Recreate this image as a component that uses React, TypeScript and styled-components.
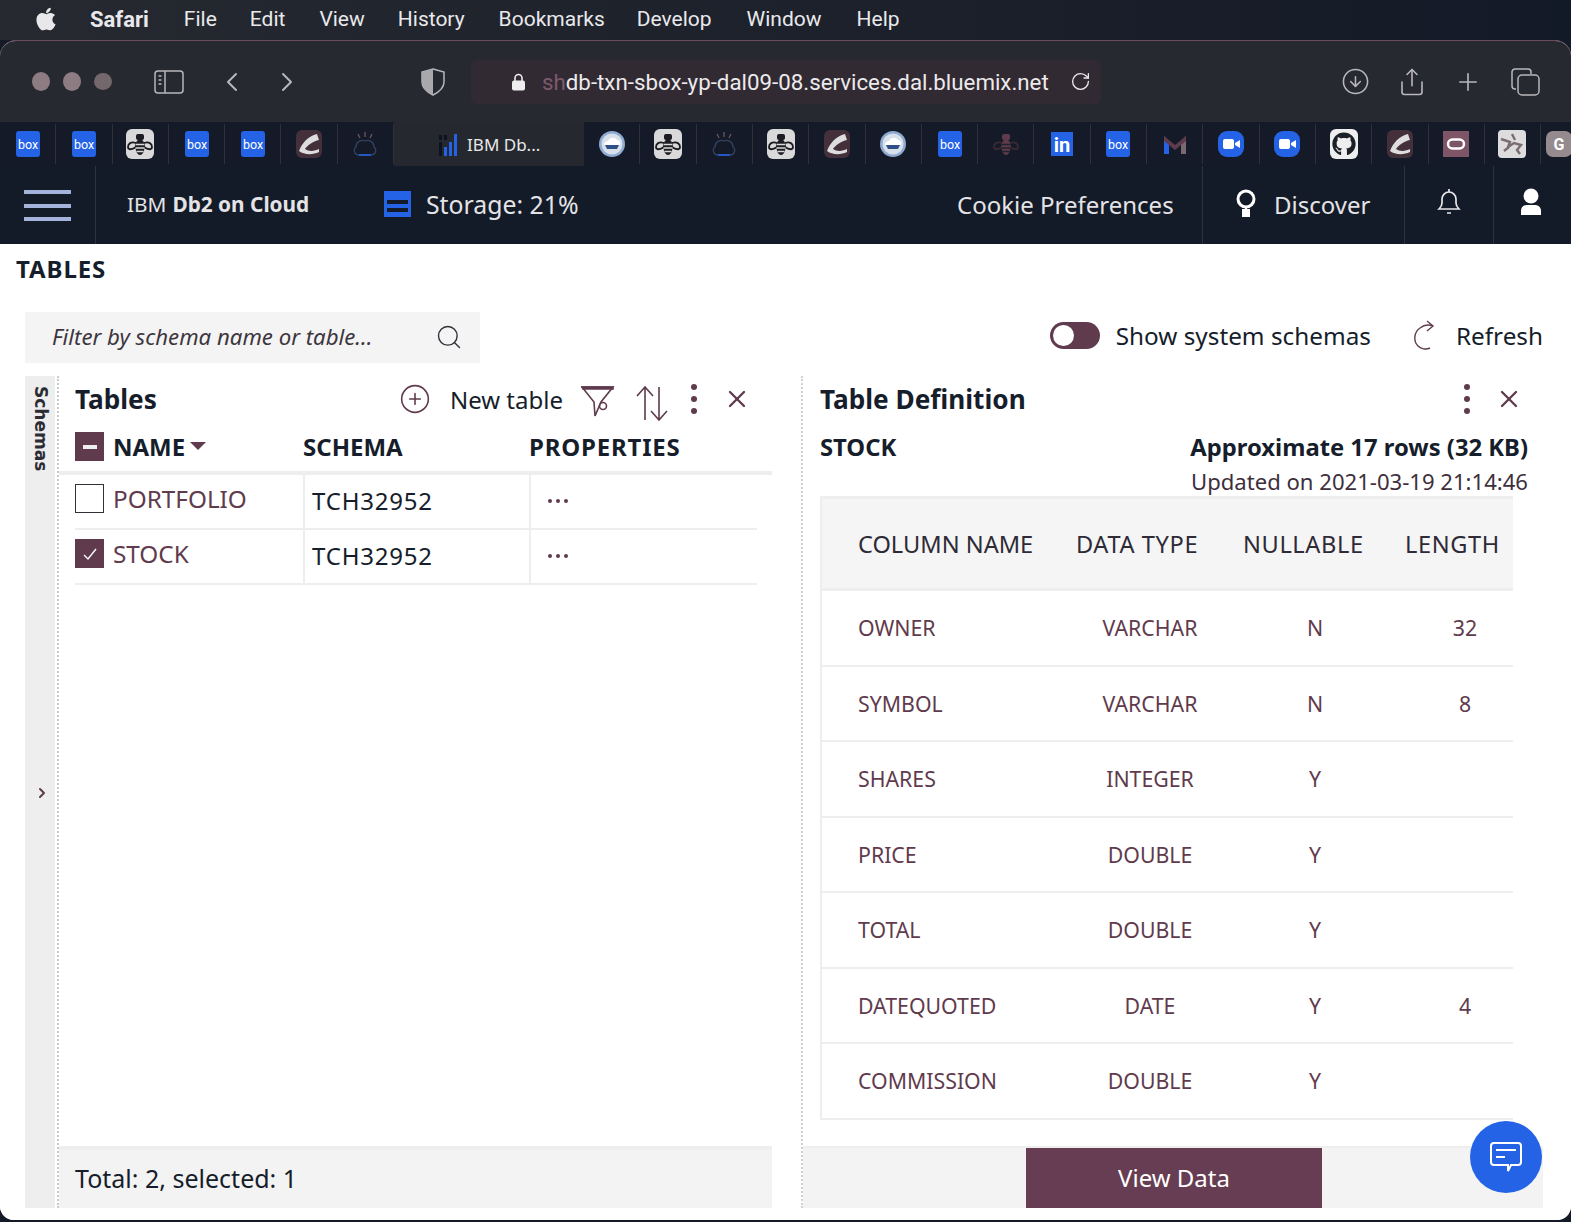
import React from "react";
import styled, { createGlobalStyle } from "styled-components";
import { FaApple, FaGithub } from "react-icons/fa";
import { ChevronLeft, ChevronRight, RotateCw, CircleArrowDown, Share, Plus, Search, CirclePlus, X } from "lucide-react";

const Global = createGlobalStyle`
  html, body { margin: 0; padding: 0; background: #141a27; }
  * { box-sizing: border-box; }
  #root { width: 1571px; height: 1222px; overflow: hidden; }
`;
const PLEX = `"Noto Sans", "Open Sans", sans-serif`;
const INK = "#161d2b";
const WINE = "#5f3b4d";

const Page = styled.div`
  width: 1571px; height: 1222px; background: #141a27; overflow: hidden; position: relative;
  font-family: ${PLEX}; color: ${INK};
`;
const MenuBar = styled.div`
  height: 40px; display: flex; align-items: center; padding: 0 0 2px 33px;
  background: linear-gradient(90deg, #262930 0%, #1d212b 50%, #131a27 100%);
  font: 400 21px Roboto, sans-serif; color: #e9e9ec;
`;
const MenuItem = styled.span<{ $left: number; $bold?: boolean }>`
  margin-left: ${(p) => p.$left}px; font-weight: ${(p) => (p.$bold ? 700 : 400)}; font-size: ${(p) => (p.$bold ? 22 : 21)}px; white-space: nowrap;
`;
const Browser = styled.div`
  height: 1180px; border-radius: 16px 16px 14px 14px; overflow: hidden; background: #fff;
  border-top: 1px solid #6d4a5c; display: flex; flex-direction: column; margin-bottom: 2px;
`;
const Toolbar = styled.div`
  height: 81px; flex: none; background: #26292f; display: flex; align-items: center; color: #b9b7bb; padding-left: 32px;
`;
const Light = styled.i<{ $dim?: boolean }>`
  width: 18px; height: ${(p) => (p.$dim ? 17 : 19)}px; border-radius: 50%; background: ${(p) => (p.$dim ? "#75686d" : "#8d7c81")}; margin-right: 13px; flex: none;
`;
const IconSlot = styled.span<{ $ml: number; $w?: number }>`
  width: ${(p) => p.$w ?? 40}px; margin-left: ${(p) => p.$ml}px; flex: none; display: flex; align-items: center; justify-content: center;
`;
const UrlBox = styled.div`
  width: 630px; height: 44px; flex: none; margin-left: 18px; background: #322a32; border-radius: 6px; display: flex; align-items: center;
  padding-left: 41px; color: #eceaec; font: 400 22.3px Roboto, sans-serif; white-space: nowrap;
`;
const Faded = styled.span` color: #7d5a6b; `;
const UrlText = styled.span` margin-left: 17px; `;
const TabBar = styled.div`
  height: 44px; flex: none; background: #141a27; display: flex; align-items: stretch; overflow: hidden;
`;
const FavTab = styled.div<{ $last?: boolean }>`
  width: ${(p) => (p.$last ? 36 : 56.3)}px; flex: none; display: flex; align-items: center; justify-content: center;
  border-right: ${(p) => (p.$last ? "0" : "1px solid #2f3138")}; margin: 2px 0;
`;
const ActiveTab = styled.div`
  width: 190px; flex: none; background: #25282f; display: flex; align-items: center; padding-left: 45px; gap: 10px;
  color: #e8e8ea; font: 400 17px ${PLEX}; height: 44px;
`;
const AppHeader = styled.div`
  height: 78px; flex: none; background: #141b28; display: flex; align-items: stretch; color: #e4e3e6; font-size: 24px;
`;
const Burger = styled.div`
  width: 96px; flex: none; border-right: 1px solid #2e323c; display: flex; flex-direction: column; gap: 9.5px; padding: 24px 0 0 24px;
  span { width: 47px; height: 4px; background: #a3b3dc; display: block; }
`;
const Brand = styled.div`
  width: 288px; flex: none; padding: 0 0 2px 31px; display: flex; align-items: center; font-size: 20.8px;
  b { font-weight: 700; margin-left: 6px; }
`;
const Storage = styled.div` display: flex; align-items: center; gap: 15px; flex: 1; font-size: 24.8px; padding-bottom: 2px; `;
const Cell = styled.div<{ $w: number; $pad?: number; $gap?: number; $center?: boolean; $rp?: number }>`
  width: ${(p) => p.$w}px; flex: none; display: flex; align-items: center; gap: ${(p) => p.$gap ?? 0}px;
  justify-content: ${(p) => (p.$center ? "center" : "flex-start")}; padding: 0 ${(p) => p.$rp ?? 0}px 2px ${(p) => p.$pad ?? 0}px;
  border-left: 1px solid #2e323c; white-space: nowrap;
`;
const Plain = styled.div` width: 245px; flex: none; display: flex; align-items: center; white-space: nowrap; padding-bottom: 2px; `;
const LiftedIcon = styled.svg` margin-bottom: 4px; `;
const Content = styled.div`
  flex: 1; min-height: 0; background: #fff; display: flex; flex-direction: column; padding: 0 28px 12px 25px;
`;
const PageTitle = styled.h1`
  margin: 0 0 0 -9px; height: 50px; font-size: 24px; letter-spacing: .9px; font-weight: 700; line-height: 50px;
`;
const FilterRow = styled.div` height: 82px; flex: none; display: flex; align-items: flex-start; `;
const SearchBox = styled.div`
  margin-top: 18px; width: 455px; height: 51px; background: #f4f4f4; display: flex; align-items: center; justify-content: space-between;
  padding: 0 17px 2px 27px; color: #3d3640; font-size: 22.2px; font-style: italic; white-space: nowrap;
`;
const RightTools = styled.div`
  margin-left: auto; margin-top: 16px; height: 51px; display: flex; align-items: center; font-size: 24.3px; white-space: nowrap;
`;
const Toggle = styled.span`
  width: 50px; height: 27px; border-radius: 14px; background: ${WINE}; position: relative; margin-right: 16px;
  &::after { content: ""; position: absolute; left: 3px; top: 3px; width: 21px; height: 21px; border-radius: 50%; background: #fff; }
`;
const RefreshWrap = styled.span` display: flex; margin: 0 19px 0 38px; color: ${WINE}; `;
const Columns = styled.div` flex: 1; min-height: 0; display: flex; align-items: stretch; `;
const Rail = styled.div`
  width: 30px; flex: none; background: #eee; position: relative; font: 700 17px "DejaVu Sans", sans-serif; color: #2c2c34;
`;
const RailLabel = styled.span`
  position: absolute; top: 10px; left: 4px; writing-mode: vertical-rl; line-height: 24px;
`;
const RailChevron = styled.span` position: absolute; top: 409px; left: 9px; color: ${WINE}; display: flex; `;
const TablesPanel = styled.section`
  width: 715px; flex: none; margin-right: 29px; display: flex; flex-direction: column; border-left: 2px dotted #c9cbcb; margin-left: 2px;
`;
const DefPanel = styled.section`
  flex: 1; min-width: 0; display: flex; flex-direction: column; border-left: 2px dotted #d0d2d2; position: relative;
`;
const PanelHead = styled.div<{ $left: number }>`
  height: 46px; flex: none; display: flex; align-items: center; padding-left: ${(p) => p.$left}px; position: relative;
`;
const PanelTitle = styled.h2` margin: 0; font-size: 26.2px; font-weight: 700; white-space: nowrap; `;
const NewTable = styled.div`
  margin-left: auto; display: flex; align-items: center; font-size: 24px; white-space: nowrap; color: ${WINE};
  span { color: ${INK}; margin: 0 11px 0 19px; }
`;
const HeadIcon = styled.span<{ $w: number; $auto?: boolean; $drop?: number }>`
  width: ${(p) => p.$w}px; flex: none; display: flex; justify-content: center; color: ${WINE};
  margin-left: ${(p) => (p.$auto ? "auto" : "0")}; margin-top: ${(p) => p.$drop ?? 0}px;
`;
const GridHead = styled.div`
  height: 53px; flex: none; display: grid; grid-template-columns: 228px 226px 1fr; padding-left: 16px; border-bottom: 4px solid #eee;
  font-size: 24px; font-weight: 700; align-items: center;
`;
const NameHead = styled.div` display: flex; align-items: center; `;
const PropHead = styled.div` letter-spacing: .8px; `;
const Sort = styled.i`
  width: 0; height: 0; border-left: 8px solid transparent; border-right: 8px solid transparent; border-top: 8px solid ${WINE}; margin: 0 0 2px 5px;
`;
const Check = styled.span<{ $on?: boolean }>`
  width: 29px; height: 29px; flex: none; margin-right: 9px; display: flex; align-items: center; justify-content: center;
  background: ${(p) => (p.$on ? WINE : "#fff")}; border: 1.5px solid ${(p) => (p.$on ? WINE : "#33303a")}; color: #fff;
`;
const Row = styled.div`
  height: 55px; flex: none; display: grid; grid-template-columns: 228px 226px 1fr; margin: 0 15px 0 16px; border-bottom: 2px solid #eee; align-items: stretch;
`;
const NameCell = styled.div` display: flex; align-items: center; padding-bottom: 6px; color: ${WINE}; font-size: 24.3px; `;
const Cell2 = styled.div`
  display: flex; align-items: center; border-left: 2px solid #eee; padding: 0 0 2px 7px; font-size: 24px; letter-spacing: .8px;
`;
const Dots = styled.span` display: flex; gap: 4px; padding-left: 10px; i { width: 4px; height: 4px; border-radius: 50%; background: ${WINE}; display: block; } `;
const Spacer = styled.div` flex: 1; `;
const Footer = styled.div`
  height: 62px; flex: none; background: #f3f3f3; border-top: 4px solid #eee; display: flex; align-items: center; padding: 0 0 2px 16px; font-size: 25px; position: relative;
`;
const DefHead = styled.div`
  padding: 0 15px 2px 17px; height: 51px; flex: none; display: flex; align-items: center; justify-content: space-between; font-size: 23.8px; font-weight: 700;
`;
const Updated = styled.div` text-align: right; padding-right: 15px; font-size: 22.1px; color: #3e2f3c; height: 23px; line-height: 16px; white-space: nowrap; `;
const DefTable = styled.div`
  margin-left: 17px; width: 693px; flex: none; border-left: 2px solid #eee; border-top: 3px solid #eee; overflow: hidden;
`;
const DefGrid = styled.div`
  display: grid; grid-template-columns: 238px 180px 150px 150px; height: 75.5px; align-items: center; width: 719px;
  border-bottom: 2px solid #eee; background: #fff; color: ${WINE}; font-size: 21.3px;
`;
const DefHeadRow = styled.div`
  display: grid; grid-template-columns: 254px 167px 162px 1fr; height: 92px; align-items: center; width: 719px;
  border-bottom: 3px solid #eee; background: #f5f5f5; color: #2e2a36; font-size: 23.6px;
`;
const DefName = styled.span` padding-left: 36px; white-space: nowrap; `;
const DefCenter = styled.span` text-align: center; white-space: nowrap; `;
const DefLeft = styled.span` white-space: nowrap; letter-spacing: .6px; `;
const DefFooter = styled.div`
  margin-top: auto; height: 62px; flex: none; background: #f3f3f3; border-top: 2px solid #eee; display: flex; justify-content: center;
`;
const ViewData = styled.button`
  width: 296px; height: 60px; background: #663d52; color: #fff; border: 0; font: 400 24px ${PLEX}; margin-left: 2px; padding: 0 0 2px;
`;
const Fab = styled.div`
  position: absolute; left: 1470px; top: 1121px; width: 72px; height: 72px; border-radius: 50%; background: #2563e6; display: flex; align-items: center; justify-content: center; color: #fff;
`;
const HubTile = styled.span`
  width: 28px; height: 30px; border-radius: 6px; background: #eee; display: flex; align-items: center; justify-content: center; color: #1b1f27;
`;

const Bee: React.FC<{ dark?: boolean }> = ({ dark }) => {
  const ink = dark ? "#5f3b4d" : "#1c1c22";
  const stripe = dark ? "#20222c" : "#d9d9d9";
  return (
    <svg width="30" height="30" viewBox="0 0 30 30">
      {!dark && <rect x="1" y="0" width="28" height="30" rx="6" fill="#d9d9d9" />}
      <path d="M11 14C6 12 3 15 3 18c0 3 4 3 8 0zM19 14c5-2 8 1 8 4 0 3-4 3-8 0z" fill="none" stroke={dark ? "#3b2a34" : ink} strokeWidth="1.8" />
      <ellipse cx="15" cy="18" rx="4.500" ry="8" fill={ink} />
      <path d="M10.500 15.500h9M10.500 19h9M11.500 22.500h7" stroke={stripe} strokeWidth="1.3" />
      <rect x="11" y="5" width="8" height="6" rx="2" fill={ink} />
    </svg>
  );
};
const BoxIcon = () => (
  <svg width="24" height="26" viewBox="0 0 24 26"><rect width="24" height="26" rx="3" fill="#2563e6" /><text x="12" y="17.5" textAnchor="middle" fontSize="12.5" fill="#fff" fontFamily="Roboto, sans-serif">box</text></svg>
);
const Shoe = () => (
  <svg width="26" height="28" viewBox="0 0 26 28"><rect width="26" height="28" rx="6" fill="#44303a" /><path d="M3 21c3-8 9-15 18-17l2 6c-6 1-12 6-14 9 4 3 10 2 14 0v3c-6 3-15 3-20-1z" fill="#ddd" /></svg>
);
const IbmCloud = () => (
  <svg width="26" height="28" viewBox="0 0 26 28" fill="none"><path d="M7 25c-5 0-6-6-3-8 0-5 5-8 9-6 4-2 9 1 9 6 3 2 2 8-3 8z" stroke="#33405e" strokeWidth="1.3" /><path d="M7 25h12" stroke="#2563e6" strokeWidth="1.6" /><path d="M13 2v5M6 4l2 4M20 4l-2 4" stroke="#6d5562" strokeWidth="1.3" /></svg>
);
const Drop = () => (
  <svg width="26" height="26" viewBox="0 0 26 26"><circle cx="13" cy="13" r="13" fill="#8fabd2" /><circle cx="13" cy="13" r="10.500" fill="#d8e0ea" /><path d="M5 14c0-3 3-4 4-4 2-4 7-4 9-1 2 0 4 2 3 5z" fill="#fff" /><path d="M6 14h14l-2 4H8z" fill="#2f4f88" /></svg>
);
const Linked = () => (
  <svg width="22" height="24" viewBox="0 0 22 24"><rect width="22" height="24" fill="#2563e6" /><text x="11" y="20" textAnchor="middle" fontSize="20" fontWeight="700" fill="#fff" fontFamily="Roboto, sans-serif">in</text></svg>
);
const Gmail = () => (
  <svg width="24" height="20" viewBox="0 0 24 20"><path d="M1 20V2l5 5v13z" fill="#2563e6" /><path d="M18 20V7l5-5v18z" fill="#7a6a70" /><path d="M1 2l11 9 11-9v5l-11 9L1 7z" fill="#5f3b4d" /></svg>
);
const Zoom = () => (
  <svg width="26" height="26" viewBox="0 0 26 26"><rect width="26" height="26" rx="9" fill="#2563e6" /><rect x="5" y="8" width="11" height="10" rx="2" fill="#fff" /><path d="M17 12l5-3v8l-5-3z" fill="#fff" /></svg>
);
const Hub = () => <HubTile><FaGithub size={24} /></HubTile>;
const Oracle = () => (
  <svg width="26" height="26" viewBox="0 0 26 26"><rect width="26" height="26" fill="#7d5566" /><rect x="5" y="8.500" width="16" height="9" rx="4.500" fill="none" stroke="#fff" strokeWidth="2.500" /></svg>
);
const MapIco = () => (
  <svg width="28" height="28" viewBox="0 0 28 28"><rect width="28" height="28" rx="4" fill="#ddd" /><path d="M3 9l9 3-2 5 6-4 7 2-4 5 3 4M6 21l5-4M14 4l3 6" stroke="#7b6d74" strokeWidth="2.400" fill="none" /></svg>
);
const GIco = () => (
  <svg width="26" height="26" viewBox="0 0 26 26"><rect width="26" height="26" rx="7" fill="#958a8e" /><text x="13" y="19" textAnchor="middle" fontSize="16" fontWeight="700" fill="#fff" fontFamily="Roboto, sans-serif">G</text></svg>
);

const before = [<BoxIcon />, <BoxIcon />, <Bee />, <BoxIcon />, <BoxIcon />, <Shoe />, <IbmCloud />];
const after = [<Drop />, <Bee />, <IbmCloud />, <Bee />, <Shoe />, <Drop />, <BoxIcon />, <Bee dark />, <Linked />, <BoxIcon />, <Gmail />, <Zoom />, <Zoom />, <Hub />, <Shoe />, <Oracle />, <MapIco />];

const menus: [string, number][] = [["File", 35], ["Edit", 33], ["View", 34], ["History", 33], ["Bookmarks", 34], ["Develop", 32], ["Window", 35], ["Help", 35]];
const rows = [
  ["OWNER", "VARCHAR", "N", "32"], ["SYMBOL", "VARCHAR", "N", "8"], ["SHARES", "INTEGER", "Y", ""], ["PRICE", "DOUBLE", "Y", ""],
  ["TOTAL", "DOUBLE", "Y", ""], ["DATEQUOTED", "DATE", "Y", "4"], ["COMMISSION", "DOUBLE", "Y", ""],
];

const Kebab = () => (
  <svg width="8" height="32" viewBox="0 0 8 32" fill={WINE}><circle cx="4" cy="4" r="3" /><circle cx="4" cy="16" r="3" /><circle cx="4" cy="28" r="3" /></svg>
);
const Filter = () => (
  <svg width="34" height="34" viewBox="0 0 34 34" fill="none" stroke={WINE} strokeWidth="1.6"><path d="M1 3h31L20 18l-6 14-1-14z" /><circle cx="22" cy="22" r="3.500" /><path d="M1 3h31v2H2z" fill={WINE} /></svg>
);
const Updown = () => (
  <svg width="34" height="36" viewBox="0 0 34 36" fill="none" stroke={WINE} strokeWidth="1.6"><path d="M10 35V2M2 11l8-9 8 9M24 2v33M16 26l8 9 8-9" /></svg>
);

export default function App() {
  return (
    <Page>
      <Global />
      <MenuBar>
        <FaApple size={26} color="#e8e8ea" />
        <MenuItem $left={31} $bold>Safari</MenuItem>
        {menus.map(([m, l]) => <MenuItem key={m} $left={l}>{m}</MenuItem>)}
      </MenuBar>
      <Browser>
        <Toolbar>
          <Light /><Light /><Light $dim />
          <IconSlot $ml={24}>
            <svg width="30" height="24" viewBox="0 0 30 24" fill="none" stroke="#b9b7bb" strokeWidth="1.5"><rect x="1" y="1" width="28" height="22" rx="3" /><path d="M11 1v22M4.500 6h3M4.500 10h3M4.500 14h3" /></svg>
          </IconSlot>
          <IconSlot $ml={23}><ChevronLeft size={32} strokeWidth={1.5} /></IconSlot>
          <IconSlot $ml={15}><ChevronRight size={32} strokeWidth={1.5} /></IconSlot>
          <IconSlot $ml={106}>
            <svg width="24" height="28" viewBox="0 0 24 28"><path d="M12 1l11 3v10c0 6-5 10-11 13C6 24 1 20 1 14V4z" fill="#26292f" stroke="#b9b7bb" strokeWidth="1.5" /><path d="M12 1L1 4v10c0 6 5 10 11 13z" fill="#a9a8ac" /></svg>
          </IconSlot>
          <UrlBox>
            <svg width="13" height="18" viewBox="0 0 13 18"><path d="M3 8V5a3.500 3.500 0 017 0v3" fill="none" stroke="#eee" strokeWidth="1.6" /><rect y="7.500" width="13" height="10" rx="2" fill="#eee" /></svg>
            <UrlText><Faded>sh</Faded>db-txn-sbox-yp-dal09-08.services.dal.bluemix.net</UrlText>
            <IconSlot $ml={20} $w={24}><RotateCw size={21} strokeWidth={1.5} /></IconSlot>
          </UrlBox>
          <IconSlot $ml={234}><CircleArrowDown size={29} strokeWidth={1.3} /></IconSlot>
          <IconSlot $ml={17}><Share size={30} strokeWidth={1.3} /></IconSlot>
          <IconSlot $ml={16}><Plus size={28} strokeWidth={1.4} /></IconSlot>
          <IconSlot $ml={18}>
            <svg width="30" height="28" viewBox="0 0 30 28" fill="none" stroke="#b9b7bb" strokeWidth="1.5"><path d="M5 21H4a3 3 0 01-3-3V4a3 3 0 013-3h13a3 3 0 013 3v2" /><rect x="7" y="7" width="21" height="20" rx="4" /></svg>
          </IconSlot>
        </Toolbar>
        <TabBar>
          {before.map((f, i) => <FavTab key={i}>{f}</FavTab>)}
          <ActiveTab>
            <svg width="18" height="23" viewBox="0 0 18 23"><path d="M0 9h3v14H0zM0 2h3v5H0zM5 2h3v5H5z" fill="#0d1320" /><path d="M5 14h3v9H5zM10 9h3v14h-3zM15 1h3v22h-3z" fill="#2563e6" /></svg>
            <span>IBM Db...</span>
          </ActiveTab>
          {after.map((f, i) => <FavTab key={i}>{f}</FavTab>)}
          <FavTab $last><GIco /></FavTab>
        </TabBar>
        <AppHeader>
          <Burger><span /><span /><span /></Burger>
          <Brand>IBM <b>Db2 on Cloud</b></Brand>
          <Storage>
            <svg width="27" height="26" viewBox="0 0 27 26"><rect width="27" height="26" fill="#2563e6" /><rect x="3" y="9" width="21" height="4" fill="#141b28" /><rect x="3" y="17" width="21" height="4" fill="#141b28" /></svg>
            <span>Storage: 21%</span>
          </Storage>
          <Plain>Cookie Preferences</Plain>
          <Cell $w={202} $pad={33} $gap={18}>
            <svg width="20" height="30" viewBox="0 0 20 30" fill="none"><circle cx="10" cy="10" r="8" stroke="#fff" strokeWidth="3" /><path d="M6 20h8v8H6z" fill="#fff" /><path d="M10 18v3" stroke="#fff" strokeWidth="2" /></svg>
            Discover
          </Cell>
          <Cell $w={89} $center>
            <LiftedIcon width="24" height="28" viewBox="0 0 24 28" fill="none" stroke="#e8e8ea" strokeWidth="1.7"><path d="M2 21c2-2 3-3 3-6V11a7 7 0 0114 0v4c0 3 1 4 3 6z" /><path d="M12 1v3M10 25h4" /></LiftedIcon>
          </Cell>
          <Cell $w={78} $center $rp={4}>
            <LiftedIcon width="24" height="28" viewBox="0 0 24 28" fill="#fff"><circle cx="12" cy="8" r="7.500" /><path d="M2 27v-4c0-4 3-6 6-6h8c3 0 6 2 6 6v4z" /></LiftedIcon>
          </Cell>
        </AppHeader>
        <Content>
          <PageTitle>TABLES</PageTitle>
          <FilterRow>
            <SearchBox>
              <span>Filter by schema name or table...</span>
              <Search size={28} strokeWidth={1.2} color="#33303a" />
            </SearchBox>
            <RightTools>
              <Toggle />
              Show system schemas
              <RefreshWrap>
                <svg width="28" height="32" viewBox="0 0 28 32" fill="none" stroke={WINE} strokeWidth="1.4"><path d="M24 6a13 13 0 00-13 2C5 12 4 21 9 26c3 3 8 4 12 2" /><path d="M18 1l6 5-6 5" /></svg>
              </RefreshWrap>
              Refresh
            </RightTools>
          </FilterRow>
          <Columns>
            <Rail>
              <RailLabel>Schemas</RailLabel>
              <RailChevron><ChevronRight size={16} strokeWidth={3} /></RailChevron>
            </Rail>
            <TablesPanel>
              <PanelHead $left={16}>
                <PanelTitle>Tables</PanelTitle>
                <NewTable>
                  <CirclePlus size={32} strokeWidth={1.2} />
                  <span>New table</span>
                </NewTable>
                <HeadIcon $w={48} $drop={4}><Filter /></HeadIcon>
                <HeadIcon $w={60} $drop={8}><Updown /></HeadIcon>
                <HeadIcon $w={24}><Kebab /></HeadIcon>
                <HeadIcon $w={62}><X size={28} strokeWidth={2} /></HeadIcon>
                <HeadIcon $w={4} />
              </PanelHead>
              <GridHead>
                <NameHead>
                  <Check $on><svg width="14" height="4"><rect width="14" height="4" fill="#eee" /></svg></Check>
                  NAME<Sort />
                </NameHead>
                <div>SCHEMA</div>
                <PropHead>PROPERTIES</PropHead>
              </GridHead>
              <Row>
                <NameCell><Check />PORTFOLIO</NameCell>
                <Cell2>TCH32952</Cell2>
                <Cell2><Dots><i /><i /><i /></Dots></Cell2>
              </Row>
              <Row>
                <NameCell>
                  <Check $on><svg width="16" height="14" viewBox="0 0 16 14" fill="none" stroke="#fff" strokeWidth="1.4"><path d="M2 8l4 4 8-10" /></svg></Check>
                  STOCK
                </NameCell>
                <Cell2>TCH32952</Cell2>
                <Cell2><Dots><i /><i /><i /></Dots></Cell2>
              </Row>
              <Spacer />
              <Footer>Total: 2, selected: 1</Footer>
            </TablesPanel>
            <DefPanel>
              <PanelHead $left={17}>
                <PanelTitle>Table Definition</PanelTitle>
                <HeadIcon $w={24} $auto><Kebab /></HeadIcon>
                <HeadIcon $w={60}><X size={28} strokeWidth={2} /></HeadIcon>
                <HeadIcon $w={4} />
              </PanelHead>
              <DefHead><span>STOCK</span><span>Approximate 17 rows (32 KB)</span></DefHead>
              <Updated>Updated on 2021-03-19 21:14:46</Updated>
              <DefTable>
                <DefHeadRow>
                  <DefName>COLUMN NAME</DefName>
                  <DefLeft>DATA TYPE</DefLeft>
                  <DefLeft>NULLABLE</DefLeft>
                  <DefLeft>LENGTH</DefLeft>
                </DefHeadRow>
                {rows.map((r) => (
                  <DefGrid key={r[0]}>
                    <DefName>{r[0]}</DefName>
                    <DefCenter>{r[1]}</DefCenter>
                    <DefCenter>{r[2]}</DefCenter>
                    <DefCenter>{r[3]}</DefCenter>
                  </DefGrid>
                ))}
              </DefTable>
              <DefFooter><ViewData>View Data</ViewData></DefFooter>
            </DefPanel>
          </Columns>
        </Content>
      </Browser>
      <Fab>
        <svg width="34" height="32" viewBox="0 0 34 32" fill="none" stroke="#fff" strokeWidth="2"><path d="M5 2h24a3 3 0 013 3v16a3 3 0 01-3 3h-7l-3 6v-6H5a3 3 0 01-3-3V5a3 3 0 013-3z" /><path d="M7 9h20M7 16h9" /></svg>
      </Fab>
    </Page>
  );
}
